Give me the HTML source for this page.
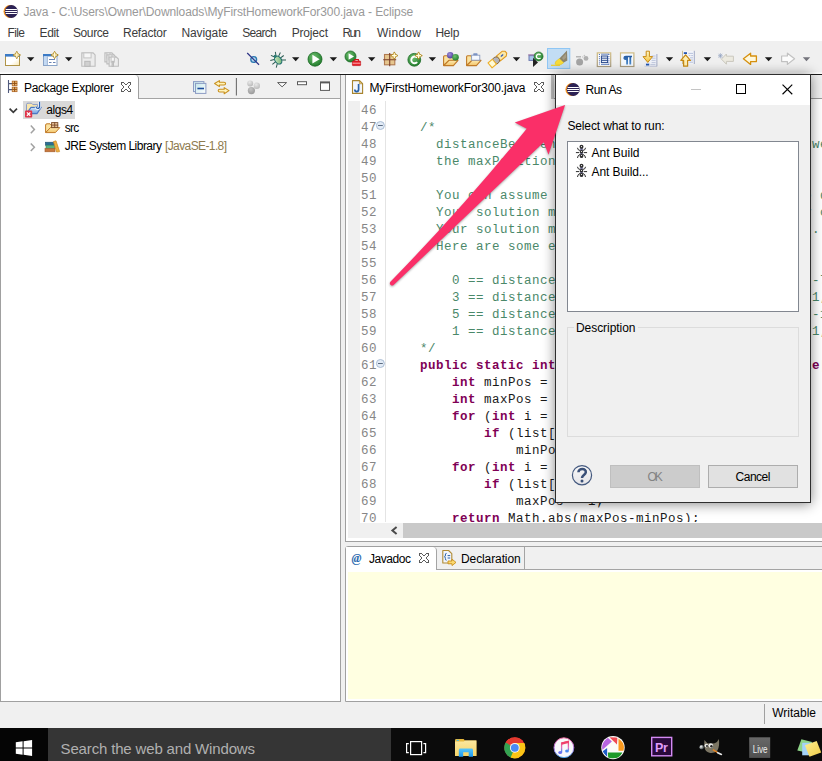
<!DOCTYPE html>
<html><head><meta charset="utf-8"><title>Eclipse</title>
<style>

html,body{margin:0;padding:0;}
body{width:822px;height:761px;overflow:hidden;position:relative;background:#f0f0f0;font-family:"Liberation Sans",sans-serif;font-size:12px;}
.a{position:absolute;}
.t{position:absolute;white-space:nowrap;line-height:16px;height:16px;}
.code{position:absolute;left:388px;top:102px;font-family:"Liberation Mono",monospace;font-size:12.5px;letter-spacing:0.5px;line-height:17px;white-space:pre;color:#1a1a1a;}
.ln{position:absolute;left:361px;top:102px;font-family:"Liberation Mono",monospace;font-size:12.5px;letter-spacing:0.5px;line-height:17px;white-space:pre;color:#868686;}
.c{color:#4a8869;}
.k{color:#7f0055;font-weight:bold;}
svg{position:absolute;overflow:visible;}

</style></head><body>
<div class="a" style="left:0;top:0;width:822px;height:41px;background:#fff;"></div>
<svg style="left:0;top:0" width="822" height="120" viewBox="0 0 822 120">
<defs><clipPath id="ec11"><circle cx="11.3" cy="11.5" r="6.0"/></clipPath></defs>
<circle cx="10.0" cy="11.5" r="6.5" fill="#f7941e"/>
<circle cx="11.3" cy="11.5" r="6.5" fill="#2c2255"/>
<g clip-path="url(#ec11)" shape-rendering="crispEdges"><rect x="5.300000000000001" y="9.0" width="13" height="1" fill="#fff"/><rect x="4.9" y="11.0" width="13" height="1" fill="#fff"/><rect x="5.300000000000001" y="13.0" width="13" height="1" fill="#fff"/></g>
</svg>
<div class="t" style="left:23.40px;top:3.8px;font-size:12px;color:#999;letter-spacing:-0.104px;">Java - C:\Users\Owner\Downloads\MyFirstHomeworkFor300.java - Eclipse</div>
<div class="t" style="left:7.50px;top:25.1px;font-size:12px;color:#3c3c3c;letter-spacing:-0.607px;">File</div>
<div class="t" style="left:39.60px;top:25.1px;font-size:12px;color:#3c3c3c;letter-spacing:-0.433px;">Edit</div>
<div class="t" style="left:73.00px;top:25.1px;font-size:12px;color:#3c3c3c;letter-spacing:-0.408px;">Source</div>
<div class="t" style="left:123.00px;top:25.1px;font-size:12px;color:#3c3c3c;letter-spacing:-0.237px;">Refactor</div>
<div class="t" style="left:181.50px;top:25.1px;font-size:12px;color:#3c3c3c;letter-spacing:-0.120px;">Navigate</div>
<div class="t" style="left:242.30px;top:25.1px;font-size:12px;color:#3c3c3c;letter-spacing:-0.728px;">Search</div>
<div class="t" style="left:291.70px;top:25.1px;font-size:12px;color:#3c3c3c;letter-spacing:-0.170px;">Project</div>
<div class="t" style="left:342.60px;top:25.1px;font-size:12px;color:#3c3c3c;letter-spacing:-1.810px;">Run</div>
<div class="t" style="left:377.00px;top:25.1px;font-size:12px;color:#3c3c3c;letter-spacing:0.256px;">Window</div>
<div class="t" style="left:435.40px;top:25.1px;font-size:12px;color:#3c3c3c;letter-spacing:-0.187px;">Help</div>
<div class="a" style="left:0;top:41px;width:822px;height:33px;background:#f0f0f0;"></div><div class="a" style="left:0;top:72px;width:822px;height:2px;background:linear-gradient(#f6f6f6,#ffffff);"></div>
<div class="a" style="left:0;top:74px;width:822px;height:1px;background:#1a1a1a;"></div>
<svg style="left:0;top:44px" width="822" height="30" viewBox="0 44 822 30"><defs>
<linearGradient id="gWin" x1="0" y1="0" x2="1" y2="1"><stop offset="0" stop-color="#fff"/><stop offset="0.6" stop-color="#fff"/><stop offset="1" stop-color="#f6e6b0"/></linearGradient>
<radialGradient id="gRun" cx="0.4" cy="0.35" r="0.7"><stop offset="0" stop-color="#6fc06f"/><stop offset="1" stop-color="#1f7a2a"/></radialGradient>
<linearGradient id="gFold" x1="0" y1="0" x2="0" y2="1"><stop offset="0" stop-color="#fdeab0"/><stop offset="1" stop-color="#f2c46a"/></linearGradient>
<linearGradient id="gYel" x1="0" y1="0" x2="0" y2="1"><stop offset="0" stop-color="#fff8c8"/><stop offset="1" stop-color="#f4c23a"/></linearGradient>
<radialGradient id="gPur" cx="0.4" cy="0.35" r="0.7"><stop offset="0" stop-color="#a090d8"/><stop offset="1" stop-color="#4a3a98"/></radialGradient>
</defs>
<rect x="5.5" y="54.5" width="14" height="11" fill="url(#gWin)" stroke="#b09448" stroke-width="1"/>
<rect x="5" y="54" width="15" height="2.6" fill="#3b7ac6"/>
<path d="M16.8 51.300000000000004 L18.1 53.7 L20.5 55 L18.1 56.3 L16.8 58.699999999999996 L15.5 56.3 L13.1 55 L15.5 53.7 Z" fill="#d8b040" stroke="#b08a28" stroke-width="0.9"/>
<path d="M16.8 52.6 V57.4 M14.4 55 H19.2" stroke="#fffbe0" stroke-width="1.2"/>
<path d="M27 57.3 h7.4 l-3.7 3.9 z" fill="#1a1a1a"/>
<rect x="43.5" y="54.5" width="13.5" height="11" fill="#fff" stroke="#8aa4c8" stroke-width="1"/>
<rect x="43" y="54" width="14.5" height="2.4" fill="#3b7ac6"/>
<rect x="44" y="56.4" width="3.2" height="8.6" fill="#c4daf4"/><path d="M47.4 56.4 v8.6" stroke="#8aa4c8" stroke-width="0.8"/>
<path d="M49 59.5 h6 M49 62.5 h2.5 M53 62.5 h2.5" stroke="#6a84b4" stroke-width="1.1"/>
<path d="M54.6 51.300000000000004 L55.9 53.7 L58.3 55 L55.9 56.3 L54.6 58.699999999999996 L53.300000000000004 56.3 L50.900000000000006 55 L53.300000000000004 53.7 Z" fill="#d8b040" stroke="#b08a28" stroke-width="0.9"/>
<path d="M54.6 52.6 V57.4 M52.2 55 H57.0" stroke="#fffbe0" stroke-width="1.2"/>
<path d="M65 57.3 h7.4 l-3.7 3.9 z" fill="#1a1a1a"/>
<path d="M81.8 52.9 h11.3 l2 2 v11.4 h-13.3 v-12.4 z" fill="#ececec" stroke="#bdbdbd" stroke-width="1.1"/>
<rect x="83.8" y="52.9" width="7.300000000000001" height="5" fill="#f6f6f6" stroke="#c4c4c4" stroke-width="1"/>
<rect x="84.8" y="61.3" width="5.300000000000001" height="5" fill="#d0d0d0" stroke="#b8b8b8" stroke-width="1"/>
<path d="M104.9 52.9 h7 l2 2 v7 h-9 v-8 z" fill="#ececec" stroke="#bdbdbd" stroke-width="1.1"/>
<rect x="106.9" y="52.9" width="3" height="5" fill="#f6f6f6" stroke="#c4c4c4" stroke-width="1"/>
<rect x="107.9" y="56.9" width="1" height="5" fill="#d0d0d0" stroke="#b8b8b8" stroke-width="1"/>
<path d="M106.9 54.9 h7 l2 2 v7 h-9 v-8 z" fill="#ececec" stroke="#bdbdbd" stroke-width="1.1"/>
<rect x="108.9" y="54.9" width="3" height="5" fill="#f6f6f6" stroke="#c4c4c4" stroke-width="1"/>
<rect x="109.9" y="58.900000000000006" width="1" height="5" fill="#d0d0d0" stroke="#b8b8b8" stroke-width="1"/>
<path d="M109.1 57.1 h7.300000000000001 l2 2 v7.199999999999999 h-9.3 v-8.2 z" fill="#ececec" stroke="#bdbdbd" stroke-width="1.1"/>
<rect x="111.1" y="57.1" width="3.3000000000000007" height="5" fill="#f6f6f6" stroke="#c4c4c4" stroke-width="1"/>
<rect x="112.1" y="61.3" width="1.3000000000000007" height="5" fill="#d0d0d0" stroke="#b8b8b8" stroke-width="1"/>
<circle cx="253.7" cy="59.5" r="2.9" fill="#b4d6ee" stroke="#2a78b0" stroke-width="1.3"/>
<path d="M247.2 53 L259 64.7" stroke="#2a3084" stroke-width="1.2"/>
<defs><linearGradient id="gBug" x1="0" y1="0" x2="1" y2="1"><stop offset="0" stop-color="#d4ecc8"/><stop offset="1" stop-color="#6cb070"/></linearGradient></defs>
<g transform="rotate(-38 277.8 59.6)"><g stroke="#2a5a50" stroke-width="1" fill="none"><path d="M275 57.4 l-3.6 -1.8 M274.6 60 h-4 M275 62.4 l-3.4 2.6 M280.6 57.4 l3.6 -1.8 M281 60 h4 M280.6 62.4 l3.4 2.6 M276.6 55 l-1.6 -3 M279 55 l1.6 -3"/></g><ellipse cx="277.8" cy="60.2" rx="3.1" ry="4.4" fill="url(#gBug)" stroke="#1f6e6e" stroke-width="1.1"/><circle cx="277.8" cy="55.4" r="1.5" fill="#2a7a72"/></g>
<path d="M292 57.3 h7.4 l-3.7 3.9 z" fill="#1a1a1a"/>
<circle cx="315" cy="59.2" r="7" fill="url(#gRun)" stroke="#1c6a24" stroke-width="0.8"/>
<path d="M312.4 54.8 L319.6 59.2 L312.4 63.6 Z" fill="#fff"/>
<path d="M329.7 57.3 h7.4 l-3.7 3.9 z" fill="#1a1a1a"/>
<circle cx="350.5" cy="56.5" r="5.5" fill="url(#gRun)" stroke="#1c6a24" stroke-width="0.8"/>
<path d="M348.6 53.2 L354 56.5 L348.6 59.8 Z" fill="#fff"/>
<rect x="352.4" y="61" width="8.2" height="4.6" rx="0.7" fill="#e8202a" stroke="#c01018" stroke-width="0.7"/>
<path d="M354.8 61 v-1.5 h3.6 v1.5" fill="none" stroke="#d0141c" stroke-width="1.1"/>
<path d="M352.6 63.2 h7.8" stroke="#ffd0d0" stroke-width="0.8"/>
<path d="M368 57.3 h7.4 l-3.7 3.9 z" fill="#1a1a1a"/>
<rect x="384.5" y="54.5" width="10.3" height="10.3" fill="#e6c68e" stroke="#b07a50" stroke-width="1.1"/>
<path d="M383.2 59.7 h13 M389.7 53 v13.2" stroke="#7a3e28" stroke-width="1.1"/>
<path d="M394.3 51.900000000000006 L395.6 54.300000000000004 L398.0 55.6 L395.6 56.9 L394.3 59.3 L393.0 56.9 L390.6 55.6 L393.0 54.300000000000004 Z" fill="#d8b040" stroke="#b08a28" stroke-width="0.9"/>
<path d="M394.3 53.2 V58.0 M391.90000000000003 55.6 H396.7" stroke="#fffbe0" stroke-width="1.2"/>
<circle cx="414.3" cy="59.8" r="6.4" fill="url(#gRun)" stroke="#1c6a24" stroke-width="0.8"/>
<path d="M417.2 57.6 A3.4 3.4 0 1 0 417.2 62.2" fill="none" stroke="#fff" stroke-width="1.9"/>
<path d="M418.6 51.900000000000006 L419.90000000000003 54.300000000000004 L422.3 55.6 L419.90000000000003 56.9 L418.6 59.3 L417.3 56.9 L414.90000000000003 55.6 L417.3 54.300000000000004 Z" fill="#d8b040" stroke="#b08a28" stroke-width="0.9"/>
<path d="M418.6 53.2 V58.0 M416.20000000000005 55.6 H421.0" stroke="#fffbe0" stroke-width="1.2"/>
<path d="M428.7 57.3 h7.4 l-3.7 3.9 z" fill="#1a1a1a"/>
<path d="M443.6 65.5 L443.6 56.7 Q443.6 55.7 444.6 55.7 L447.6 55.7 L449 57.1 L455.4 57.1 L455.4 60.5 L449 60.5 Z" fill="#fbe3a0" stroke="#c07a28" stroke-width="1.1" stroke-linejoin="round"/>
<path d="M443.7 65.6 L449 60.300000000000004 L458 60.300000000000004 L453.4 65.6 Z" fill="url(#gFold)" stroke="#c07a28" stroke-width="1.1" stroke-linejoin="round"/>
<circle cx="450.2" cy="55.3" r="3.2" fill="url(#gPur)"/>
<circle cx="455.5" cy="57.3" r="3.3" fill="url(#gRun)"/>
<path d="M466.6 65.5 L466.6 56.7 Q466.6 55.7 467.6 55.7 L470.6 55.7 L472 57.1 L478.4 57.1 L478.4 60.5 L472 60.5 Z" fill="#fbe3a0" stroke="#c07a28" stroke-width="1.1" stroke-linejoin="round"/>
<path d="M466.7 65.6 L472 60.300000000000004 L481 60.300000000000004 L476.4 65.6 Z" fill="url(#gFold)" stroke="#c07a28" stroke-width="1.1" stroke-linejoin="round"/>
<rect x="471.6" y="55.2" width="8.2" height="5" fill="#f4f8ff" stroke="#8a9cc0" stroke-width="0.9"/>
<rect x="473.2" y="53.2" width="4.4" height="2" rx="0.8" fill="#7a92c4"/>
<g transform="translate(498 58.8) rotate(-39.5)"><path d="M0.5 -3.1 L8.2 -3.1 L10.3 -1.2 L10.3 1.2 L8.2 3.1 L0.5 3.1 Z" fill="#fbe8a8" stroke="#e09a20" stroke-width="1.1" stroke-linejoin="round"/><path d="M-4.6 -3.3 L-1.2 -3.3 L0.8 -1.6 L0.8 1.6 L-1.2 3.3 L-4.6 3.3 Z" fill="#b4b4bc" stroke="#8a6a3a" stroke-width="0.9" stroke-linejoin="round"/><path d="M-4.6 -3.2 L-10.3 -3.2 L-10.3 3.2 L-4.6 3.2 Z" fill="#fffbd8" stroke="#eeb02a" stroke-width="1.1" stroke-linejoin="round"/><path d="M4.2 0 h2" stroke="#2a55b8" stroke-width="1.3" stroke-linecap="round"/></g>
<path d="M512.8 57.3 h7.4 l-3.7 3.9 z" fill="#1a1a1a"/>
<rect x="529" y="55.6" width="6.6" height="4.8" fill="#a8c4ec" stroke="#6a78b0" stroke-width="1"/>
<path d="M528.2 54.9 h9" stroke="#9a78a8" stroke-width="1.2"/>
<path d="M533 57.8 L538 62.4 L533 67 Z" fill="#222"/>
<circle cx="538.6" cy="56.4" r="4.5" fill="url(#gRun)" stroke="#1c6a24" stroke-width="0.6"/>
<path d="M540.5 55 A2.3 2.3 0 1 0 540.5 57.8" fill="none" stroke="#fff" stroke-width="1.3"/>
<rect x="547.5" y="48.5" width="22.3" height="20" fill="#c2ddf4" stroke="#8fc6f4" stroke-width="1"/>
<path d="M551 65.3 h9" stroke="#f0d028" stroke-width="1.2"/>
<path d="M559.4 58.6 L563.8 62.6 L561 64.6 L556.6 65 L555 63.8 L555.8 61.4 Z" fill="#f8dc38" stroke="#e8c418" stroke-width="0.6"/>
<path d="M559.4 58.4 L567 50.6 L567.3 60.6 L563.8 62.6 Z" fill="#8c846c"/>
<path d="M562 58 L566 53.6 L566.2 57.6 L563.6 60 Z" fill="#a49c86"/>
<circle cx="579.6" cy="62" r="3.5" fill="#a4a4a4"/><path d="M576 56.8 h5" stroke="#a8a8a8" stroke-width="1.2"/><circle cx="586" cy="58.4" r="2.4" fill="#b0b0b0"/><circle cx="584.4" cy="55.6" r="0.8" fill="#c0c0c0"/><circle cx="582.8" cy="57" r="0.7" fill="#c4c4c4"/>
<defs><linearGradient id="gBeige" x1="0" y1="0" x2="0" y2="1"><stop offset="0" stop-color="#d0bc84"/><stop offset="1" stop-color="#a89c80"/></linearGradient><linearGradient id="gPil" x1="0" y1="0" x2="0" y2="1"><stop offset="0" stop-color="#245aa0"/><stop offset="1" stop-color="#4c8ccc"/></linearGradient></defs>
<rect x="597.3" y="52.9" width="13.4" height="13.6" fill="#fff" stroke="url(#gBeige)" stroke-width="1.2"/>
<rect x="601.4" y="56" width="6.2" height="6.6" fill="#e8eef8" stroke="#2a4a8c" stroke-width="1"/>
<path d="M601.4 58.2 h6.2 M601.4 60.4 h6.2" stroke="#2a4a8c" stroke-width="0.9"/>
<path d="M601 54.2 h8 M601 64.4 h8" stroke="#5a7cc0" stroke-width="0.9"/>
<path d="M599.4 54 v11 M608.9 54 v11" stroke="#4464b0" stroke-width="1" stroke-dasharray="1 1.1"/>
<rect x="620.5" y="52.9" width="13.4" height="13.6" fill="#f4f9ff" stroke="url(#gBeige)" stroke-width="1.2"/>
<path d="M623.4 58 Q623.4 55.7 625.8 55.7 H632 V57.2 H631.2 V64.6 H629.4 V57.2 H628 V64.6 H626.2 V60 Q623.4 60 623.4 58 Z" fill="url(#gPil)"/>
<rect x="649.2" y="54.2" width="7.6" height="12" fill="#eef1f8" stroke="none"/>
<path d="M656.9 54 V66.4" stroke="#98a2c0" stroke-width="0.9"/>
<path d="M644.6 66.3 H657" stroke="#b0b8d0" stroke-width="0.7"/>
<path d="M651.6 56 h4 M651.6 58.2 h4 M651.6 60.4 h4 M651.6 62.6 h4 M650.4 64.6 h5" stroke="#b4bdd6" stroke-width="0.8"/>
<rect x="644.6" y="62.6" width="5.4" height="3.8" fill="#e4e9f4"/>
<rect x="646" y="63.7" width="3.2" height="1.8" fill="#2456b0"/>
<path d="M646.2 51.2 h3.2 v5.4 h3.2 l-4.8 5.8 l-4.8 -5.8 h3.2 z" fill="url(#gYel)" stroke="#c88a14" stroke-width="1" stroke-linejoin="round"/>
<path d="M665.8 57.3 h7.4 l-3.7 3.9 z" fill="#1a1a1a"/>
<rect x="682.6" y="51" width="11.6" height="12.8" fill="#f2f4fa"/>
<path d="M682.5 50.8 V64" stroke="#c8b888" stroke-width="0.9"/><path d="M694.3 50.8 V64" stroke="#98a2c0" stroke-width="0.9"/>
<path d="M688.4 53.4 h4.6 M688.8 55.6 h1.6 M691.2 55.6 h1.8 M690 57.8 h3 M691 60 h2 M689.4 62.2 h3.6" stroke="#aab6d4" stroke-width="0.8"/>
<rect x="683.8" y="52.2" width="3.2" height="1.8" fill="#2456b0"/>
<path d="M683.6 66.2 h4 v-5.8 h2.8 l-4.8 -5.6 l-4.8 5.6 h2.8 z" fill="#fff0b4" stroke="#c88a14" stroke-width="1.25" stroke-linejoin="round"/>
<path d="M703.7 57.3 h7.4 l-3.7 3.9 z" fill="#1a1a1a"/>
<path d="M721.4 59.1 L726.4 54 L726.4 56.2 L733.4 56.2 L733.4 61.4 L726.4 61.4 L726.4 64.2 Z" fill="#eceae0" stroke="#cac8be" stroke-width="1" stroke-linejoin="round"/>
<path d="M718.6 53.8 l3.6 4 M722.2 53.8 l-3.6 4 M720.4 53.2 v5.2 M718 55.8 h4.8" stroke="#92a2c0" stroke-width="0.7"/>
<path d="M743.4 58.8 L750.6 53.2 L750.6 56 L756.4 56 L756.4 61.6 L750.6 61.6 L750.6 64.4 Z" fill="#fff8dc" stroke="#d6900e" stroke-width="1.3" stroke-linejoin="round"/>
<path d="M764.9 57.3 h7.4 l-3.7 3.9 z" fill="#1a1a1a"/>
<path d="M794.6 58.8 L787.4 53.2 L787.4 56 L781.6 56 L781.6 61.6 L787.4 61.6 L787.4 64.4 Z" fill="#fcfcfc" stroke="#c2c2c2" stroke-width="1.2" stroke-linejoin="round"/>
<path d="M802.8 57.3 h7.4 l-3.7 3.9 z" fill="#74747c"/></svg>
<div class="a" style="left:0;top:75px;width:341px;height:627px;background:#fff;border-right:1px solid #a0a0a0;border-bottom:1px solid #a0a0a0;box-sizing:border-box;"></div>
<div class="a" style="left:0;top:75px;width:340px;height:23px;background:#f0f0f0;border-bottom:1px solid #a4a4a4;box-sizing:content-box;"></div>
<div class="a" style="left:1px;top:75px;width:137px;height:24px;background:#fff;border-right:1px solid #a0a0a0;border-radius:0 4px 0 0;"></div>
<div class="a" style="left:0;top:75px;width:1px;height:626px;background:#a0a0a0;"></div>
<div class="t" style="left:24.00px;top:79.8px;font-size:12px;color:#000;letter-spacing:-0.316px;">Package Explorer</div>
<div class="a" style="left:23px;top:101px;width:52px;height:18px;background:#d9d9d9;"></div>
<div class="t" style="left:46.30px;top:101.6px;font-size:12px;color:#000;letter-spacing:-0.470px;">algs4</div>
<div class="t" style="left:64.80px;top:119.6px;font-size:12px;color:#000;letter-spacing:-0.710px;">src</div>
<div class="t" style="left:64.80px;top:137.6px;font-size:12px;color:#000;letter-spacing:-0.519px;">JRE System Library</div>
<div class="t" style="left:165.00px;top:137.6px;font-size:12px;color:#8e7b4f;letter-spacing:-0.609px;">[JavaSE-1.8]</div>
<svg style="left:0;top:0" width="345" height="160" viewBox="0 0 345 160"><path d="M8.5 80 V93 M8.5 83.6 H12 M8.5 89.6 H12" stroke="#505a7c" stroke-width="1.1" fill="none"/>
<rect x="12.1" y="81" width="5" height="4.8" fill="#c47426" stroke="#a85e1c" stroke-width="0.5"/>
<path d="M14.6 81 v4.8 M12.1 83.4 h5" stroke="#8a4a14" stroke-width="0.7"/>
<circle cx="13.299999999999999" cy="82.2" r="0.65" fill="#f6deb0"/>
<circle cx="15.899999999999999" cy="82.2" r="0.65" fill="#f6deb0"/>
<circle cx="13.299999999999999" cy="84.6" r="0.65" fill="#f6deb0"/>
<circle cx="15.899999999999999" cy="84.6" r="0.65" fill="#f6deb0"/>
<rect x="12.1" y="87" width="5" height="4.8" fill="#c47426" stroke="#a85e1c" stroke-width="0.5"/>
<path d="M14.6 87 v4.8 M12.1 89.4 h5" stroke="#8a4a14" stroke-width="0.7"/>
<circle cx="13.299999999999999" cy="88.2" r="0.65" fill="#f6deb0"/>
<circle cx="15.899999999999999" cy="88.2" r="0.65" fill="#f6deb0"/>
<circle cx="13.299999999999999" cy="90.6" r="0.65" fill="#f6deb0"/>
<circle cx="15.899999999999999" cy="90.6" r="0.65" fill="#f6deb0"/>
<path d="M121 82h1v1h-1zM122 82h1v1h-1zM123 82h1v1h-1zM128 82h1v1h-1zM129 82h1v1h-1zM130 82h1v1h-1zM121 83h1v1h-1zM124 83h1v1h-1zM127 83h1v1h-1zM130 83h1v1h-1zM121 84h1v1h-1zM125 84h1v1h-1zM126 84h1v1h-1zM130 84h1v1h-1zM122 85h1v1h-1zM129 85h1v1h-1zM123 86h1v1h-1zM128 86h1v1h-1zM123 87h1v1h-1zM128 87h1v1h-1zM122 88h1v1h-1zM129 88h1v1h-1zM121 89h1v1h-1zM125 89h1v1h-1zM126 89h1v1h-1zM130 89h1v1h-1zM121 90h1v1h-1zM124 90h1v1h-1zM127 90h1v1h-1zM130 90h1v1h-1zM121 91h1v1h-1zM122 91h1v1h-1zM123 91h1v1h-1zM128 91h1v1h-1zM129 91h1v1h-1zM130 91h1v1h-1z" fill="#5c5c5c" shape-rendering="crispEdges"/>
<defs><linearGradient id="gCy" x1="0" y1="0" x2="1" y2="1"><stop offset="0" stop-color="#c4e6ea"/><stop offset="1" stop-color="#ffffff"/></linearGradient></defs>
<rect x="193.5" y="81.6" width="10.4" height="10" fill="url(#gCy)" stroke="#8c9cc4" stroke-width="1"/>
<rect x="195.5" y="83.4" width="10.4" height="10" fill="url(#gCy)" stroke="#8c9cc4" stroke-width="1"/>
<path d="M197.4 88.5 h6.6" stroke="#1c4c9c" stroke-width="1.6"/>
<path d="M214.6 83.5 L219.4 80.6 L219.4 82.2 L224 82.2 Q225.6 82.2 225.6 83.6 Q225.6 85 224 85 L219.4 85 L219.4 86.6 Z" fill="#fff2b8" stroke="#c8901e" stroke-width="1.1" stroke-linejoin="round"/>
<path d="M229 90.6 L224.2 87.6 L224.2 89.2 L219.8 89.2 Q218.2 89.2 218.2 90.6 Q218.2 92 219.8 92 L224.2 92 L224.2 93.7 Z" fill="#fff2b8" stroke="#c8901e" stroke-width="1.1" stroke-linejoin="round"/>
<path d="M236.4 78 V95.5" stroke="#6e6e6e" stroke-width="1.1"/>
<defs><radialGradient id="gGr" cx="0.4" cy="0.3" r="0.8"><stop offset="0" stop-color="#e8e8e8"/><stop offset="1" stop-color="#b4b4b4"/></radialGradient><radialGradient id="gGr2" cx="0.4" cy="0.3" r="0.8"><stop offset="0" stop-color="#c4c4c4"/><stop offset="1" stop-color="#949494"/></radialGradient></defs>
<circle cx="250.2" cy="83.4" r="3" fill="url(#gGr)"/><circle cx="256.8" cy="85.8" r="3.2" fill="url(#gGr)"/><circle cx="251.4" cy="90.6" r="3.6" fill="url(#gGr2)"/>
<path d="M277.6 82.6 H286.6 L282.1 86.8 Z" fill="#fff" stroke="#5a5a5a" stroke-width="1" stroke-linejoin="miter"/>
<rect x="297.5" y="81.7" width="9" height="3" fill="#fff" stroke="#5a5a5a" stroke-width="1"/>
<rect x="320.5" y="82" width="9" height="8.4" fill="#fff" stroke="#5a5a5a" stroke-width="1"/><path d="M320 82.6 h10" stroke="#5a5a5a" stroke-width="1.6"/>
<path d="M9.6 108.6 L13.3 112.3 L17 108.6" fill="none" stroke="#3a3a3a" stroke-width="1.7"/>
<path d="M30.8 125.60000000000001 L34.4 129.4 L30.8 133.20000000000002" fill="none" stroke="#a2a2a2" stroke-width="1.5"/>
<path d="M30.8 143.39999999999998 L34.4 147.2 L30.8 151.0" fill="none" stroke="#a2a2a2" stroke-width="1.5"/>
<defs><linearGradient id="gBl" x1="0" y1="0" x2="0" y2="1"><stop offset="0" stop-color="#d8e8fa"/><stop offset="1" stop-color="#6e9fe0"/></linearGradient></defs>
<path d="M26.5 112.6 L26.5 104.6 Q26.5 103.2 28 103.2 L31.4 103.2 L32.8 104.6 L37.6 104.6 L37.6 107.6 L31 107.6 Z" fill="#fbe7ac" stroke="#8a9cc8" stroke-width="1" stroke-linejoin="round"/>
<path d="M26.6 113.6 L31 107.4 L41.2 107.4 L37 113.6 Z" fill="url(#gBl)" stroke="#4a78c4" stroke-width="1.1" stroke-linejoin="round"/>
<path d="M39.6 101.8 V106.4 Q39.6 108.4 37.6 108.4 Q36 108.4 36 106.6" fill="none" stroke="#fff" stroke-width="2.6"/>
<path d="M39.6 101.8 V106.4 Q39.6 108.4 37.6 108.4 Q36 108.4 36 106.6" fill="none" stroke="#2e62b0" stroke-width="1.3"/>
<rect x="25" y="110.6" width="7.2" height="7" rx="0.8" fill="#e0344a"/>
<path d="M26.9 112.4 L30.3 115.8 M30.3 112.4 L26.9 115.8" stroke="#fff" stroke-width="1.3"/>
<path d="M45.6 132.4 L45.6 125 Q45.6 123.8 47 123.8 L50 123.8 L51.4 125.2 L57 125.2 L57 128 L50.4 128 Z" fill="#fbe3a0" stroke="#c07a28" stroke-width="1" stroke-linejoin="round"/>
<path d="M45.7 132.6 L50.4 127.6 L59.8 127.6 L55.4 132.6 Z" fill="url(#gFold)" stroke="#c07a28" stroke-width="1" stroke-linejoin="round"/>
<rect x="51.6" y="122.6" width="6.2" height="5" fill="#e8c49a" stroke="#7a4a28" stroke-width="0.9"/><path d="M54.7 122.2 v5.6 M51.4 125.1 h6.8" stroke="#7a4a28" stroke-width="0.9"/>
<rect x="45.4" y="142.2" width="9" height="3" fill="#2a6e92" stroke="#1e5070" stroke-width="0.6"/>
<rect x="46" y="145.4" width="9" height="3" fill="#5cb27e" stroke="#3c8a5a" stroke-width="0.6"/>
<rect x="45" y="148.6" width="10" height="3.2" fill="#c8783e" stroke="#a05a28" stroke-width="0.6"/>
<path d="M53.4 141.6 L56 140.8 L59.6 151.6 L56.6 152 Z" fill="#f0b040" stroke="#c88a20" stroke-width="0.7"/></svg>
<div class="a" style="left:345px;top:75px;width:480px;height:467px;background:#fff;border-left:1px solid #a0a0a0;border-bottom:1px solid #a0a0a0;box-sizing:border-box;"></div>
<div class="a" style="left:552px;top:75px;width:270px;height:23px;background:#f0f0f0;border-bottom:1px solid #9a9a9a;"></div>
<div class="a" style="left:551px;top:75px;width:3px;height:24px;background:#c4c4c4;"></div>
<div class="t" style="left:369.40px;top:79.8px;font-size:12px;color:#000;letter-spacing:-0.159px;">MyFirstHomeworkFor300.java</div>
<div class="a" style="left:348px;top:101px;width:12px;height:437px;background:#f0f0f0;"></div>
<div class="a" style="left:385px;top:101px;width:1px;height:421px;background:#e4e4e4;"></div>
<div class="a" style="left:346px;top:100px;width:476px;height:422px;overflow:hidden;"><div class="ln" style="left:15px;top:3px;">46
47
48
49
50
51
52
53
54
55
56
57
58
59
60
61
62
63
64
65
66
67
68
69
70</div>
<div class="code" style="left:42px;top:3px;">
<span class="c">    /*</span>
<span class="c">      distanceBetweenMinAndMax returns difference between the minPosition and</span>
<span class="c">      the maxPosition in an array of doubles.</span>

<span class="c">      You can assume the array is nonempty and has no duplicates.</span>
<span class="c">      Your solution must go through the array exactly once.</span>
<span class="c">      Your solution must not call any other functions.</span>
<span class="c">      Here are some examples (using "==" informally):</span>

<span class="c">        0 == distanceBetweenMinAndMax(new double[] { -7 })</span>
<span class="c">        3 == distanceBetweenMinAndMax(new double[] { 1, -4, -7, 7, 8, 11 }),</span>
<span class="c">        5 == distanceBetweenMinAndMax(new double[] { -13, -4, -7, 7, 8, 11 })</span>
<span class="c">        1 == distanceBetweenMinAndMax(new double[] { 1, -4, -7, 7, 8, 11, -9 })</span>
<span class="c">    */</span>
    <span class="k">public static int</span> distanceBetweenMinAndMax (<span class="k">double</span>[] list) {
        <span class="k">int</span> minPos = 0;
        <span class="k">int</span> maxPos = 0;
        <span class="k">for</span> (<span class="k">int</span> i = 1; i &lt; list.length; i++)
            <span class="k">if</span> (list[i] &lt; list[minPos])
                minPos = i;
        <span class="k">for</span> (<span class="k">int</span> i = 1; i &lt; list.length; i++)
            <span class="k">if</span> (list[i] &gt; list[maxPos])
                maxPos = i;
        <span class="k">return</span> Math.abs(maxPos-minPos);</div></div>
<div class="a" style="left:360px;top:523px;width:462px;height:15px;background:#f0f0f0;"></div>
<div class="a" style="left:403px;top:523px;width:419px;height:15px;background:#c9c9c9;"></div>
<svg style="left:390px;top:526px" width="8" height="9" viewBox="0 0 8 9"><path d="M6.6 1 L2.4 4.5 L6.6 8" fill="none" stroke="#4a4a4a" stroke-width="2"/></svg>
<div class="a" style="left:345px;top:546px;width:480px;height:156px;background:#fff;border:1px solid #a0a0a0;box-sizing:border-box;border-radius:3px 0 0 0;"></div><div class="a" style="left:348px;top:572px;width:474px;height:127px;background:#ffffe1;"></div>
<div class="a" style="left:346px;top:547px;width:476px;height:22px;background:#f0f0f0;border-bottom:1px solid #a4a4a4;"></div>
<div class="a" style="left:346px;top:547px;width:90px;height:23px;background:#fff;border-right:1px solid #a4a4a4;border-radius:0 4px 0 0;"></div>
<div class="a" style="left:524px;top:547px;width:1px;height:22px;background:#a4a4a4;"></div>
<div class="t" style="left:351.6px;top:549.6px;font-family:'Liberation Serif',serif;font-style:italic;font-weight:bold;font-size:12px;color:#2e6cb0;">@</div>
<div class="t" style="left:369.00px;top:551.3px;font-size:12px;color:#000;letter-spacing:-0.450px;">Javadoc</div>
<div class="t" style="left:461.00px;top:551.3px;font-size:12px;color:#000;letter-spacing:-0.102px;">Declaration</div>
<svg style="left:0;top:0" width="822" height="600" viewBox="0 0 822 600"><path d="M352.5 80.6 H359.6 L362.6 83.6 V93.4 H352.5 Z" fill="#f2f6fc" stroke="#a8842e" stroke-width="1.1" stroke-linejoin="round"/>
<path d="M359.4 80.8 V83.8 H362.4 Z" fill="#e8c878" stroke="#a8842e" stroke-width="0.6"/>
<path d="M358.6 84 V89.6 Q358.6 91.6 356.6 91.6 Q354.8 91.6 354.8 89.6" fill="none" stroke="#2a62a8" stroke-width="1.7"/>
<path d="M534 82h1v1h-1zM535 82h1v1h-1zM536 82h1v1h-1zM541 82h1v1h-1zM542 82h1v1h-1zM543 82h1v1h-1zM534 83h1v1h-1zM537 83h1v1h-1zM540 83h1v1h-1zM543 83h1v1h-1zM534 84h1v1h-1zM538 84h1v1h-1zM539 84h1v1h-1zM543 84h1v1h-1zM535 85h1v1h-1zM542 85h1v1h-1zM536 86h1v1h-1zM541 86h1v1h-1zM536 87h1v1h-1zM541 87h1v1h-1zM535 88h1v1h-1zM542 88h1v1h-1zM534 89h1v1h-1zM538 89h1v1h-1zM539 89h1v1h-1zM543 89h1v1h-1zM534 90h1v1h-1zM537 90h1v1h-1zM540 90h1v1h-1zM543 90h1v1h-1zM534 91h1v1h-1zM535 91h1v1h-1zM536 91h1v1h-1zM541 91h1v1h-1zM542 91h1v1h-1zM543 91h1v1h-1z" fill="#5c5c5c" shape-rendering="crispEdges"/>
<circle cx="380.4" cy="125.5" r="4" fill="#e2ebf6" stroke="#a4b8d0" stroke-width="0.9"/><path d="M378 125.5 h4.8" stroke="#5a6a80" stroke-width="1"/>
<circle cx="380.4" cy="363.5" r="4" fill="#e2ebf6" stroke="#a4b8d0" stroke-width="0.9"/><path d="M378 363.5 h4.8" stroke="#5a6a80" stroke-width="1"/>
<path d="M419 553h1v1h-1zM420 553h1v1h-1zM421 553h1v1h-1zM426 553h1v1h-1zM427 553h1v1h-1zM428 553h1v1h-1zM419 554h1v1h-1zM422 554h1v1h-1zM425 554h1v1h-1zM428 554h1v1h-1zM419 555h1v1h-1zM423 555h1v1h-1zM424 555h1v1h-1zM428 555h1v1h-1zM420 556h1v1h-1zM427 556h1v1h-1zM421 557h1v1h-1zM426 557h1v1h-1zM421 558h1v1h-1zM426 558h1v1h-1zM420 559h1v1h-1zM427 559h1v1h-1zM419 560h1v1h-1zM423 560h1v1h-1zM424 560h1v1h-1zM428 560h1v1h-1zM419 561h1v1h-1zM422 561h1v1h-1zM425 561h1v1h-1zM428 561h1v1h-1zM419 562h1v1h-1zM420 562h1v1h-1zM421 562h1v1h-1zM426 562h1v1h-1zM427 562h1v1h-1zM428 562h1v1h-1z" fill="#5c5c5c" shape-rendering="crispEdges"/>
<path d="M442.8 550.5 H448.6 L451.8 553.6 V563 H442.8 Z" fill="#f2f6fc" stroke="#b08a34" stroke-width="1.1" stroke-linejoin="round"/>
<path d="M446.6 553.4 Q445 553.4 445.4 555 Q445.6 556.6 444.4 556.8 Q445.6 557 445.4 558.6 Q445 560.2 446.6 560.2" fill="none" stroke="#2a62a8" stroke-width="1"/>
<path d="M447.6 555.6 h2.6 M447.6 558 h2.6" stroke="#2a62a8" stroke-width="1"/>
<path d="M448 561 H452 V559.2 L456 562.4 L452 565.6 V563.8 H448 Z" fill="#fbd870" stroke="#c8901e" stroke-width="0.9" stroke-linejoin="round"/></svg>
<div class="a" style="left:764px;top:704px;width:1px;height:20px;background:#a0a0a0;"></div>
<div class="t" style="left:772.20px;top:705.3px;font-size:12px;color:#000;letter-spacing:-0.000px;">Writable</div>
<div class="a" style="left:0;top:728px;width:822px;height:33px;background:#0b0b0b;"></div>
<div class="a" style="left:0;top:728px;width:48px;height:33px;background:#050505;"></div>
<div class="a" style="left:48px;top:728px;width:343px;height:33px;background:#353535;"></div>
<div class="t" style="left:60.60px;top:741.2px;font-size:15px;color:#b0b0b0;letter-spacing:-0.162px;">Search the web and Windows</div>
<svg style="left:0;top:728px" width="822" height="33" viewBox="0 728 822 33"><path d="M15.8 742.3 L22.6 741.3 V747.5 H15.8 Z M23.6 741.2 L32.1 740 V747.5 H23.6 Z M15.8 748.5 H22.6 V754.7 L15.8 753.7 Z M23.6 748.5 H32.1 V756 L23.6 754.8 Z" fill="#fff"/>
<rect x="410.6" y="741.6" width="11" height="13" fill="none" stroke="#fff" stroke-width="1.2"/>
<path d="M408.8 743.6 H406.6 V752.6 H408.8 M423.4 743.6 H425.6 V752.6 H423.4" fill="none" stroke="#fff" stroke-width="1.2"/>
<defs><linearGradient id="gFe" x1="0" y1="0" x2="0" y2="1"><stop offset="0" stop-color="#fbe8a0"/><stop offset="1" stop-color="#f6d468"/></linearGradient><linearGradient id="gFb" x1="0" y1="0" x2="0" y2="1"><stop offset="0" stop-color="#58c6fa"/><stop offset="1" stop-color="#1c98f0"/></linearGradient></defs>
<path d="M455 740.2 Q455 739 456.2 739 H463.6 L465 740.6 H476.4 V756 H455 Z" fill="#e8b83c"/>
<path d="M455 741.4 H463.8 L465.2 740.4 H476.4 V756 H455 Z" fill="url(#gFe)"/>
<rect x="456.6" y="739.8" width="2.4" height="1" fill="#38c0f0"/>
<path d="M458.8 756.8 V750 Q458.8 748.6 460.2 748.6 H471.6 Q473 748.6 473 750 V756.8 H468.7 V752.3 H463.2 V756.8 Z" fill="url(#gFb)"/>
<defs><clipPath id="chc"><circle cx="514.8" cy="747.8" r="10.6"/></clipPath></defs>
<g clip-path="url(#chc)"><circle cx="514.8" cy="747.8" r="10.6" fill="#e53a30"/><path d="M514.8 747.8 L504 741.6 L498 760 L512 762 L519.4 750.4 Z" fill="#34a352"/><path d="M514.8 747.8 L510.2 758.6 L516 764 L532 756 L526 743 L514.8 743 Z" fill="#fbc516"/><path d="M505.2 742.6 H528 V736 H500 Z" fill="#e53a30"/></g>
<circle cx="514.8" cy="747.8" r="4.9" fill="#f4f4f4"/><circle cx="514.8" cy="747.8" r="3.9" fill="#4a8af4"/>
<defs><linearGradient id="gIt" x1="0" y1="0" x2="0" y2="1"><stop offset="0" stop-color="#f06aa0"/><stop offset="0.5" stop-color="#b070e0"/><stop offset="1" stop-color="#4aa8f0"/></linearGradient></defs>
<circle cx="563.9" cy="747.7" r="9.9" fill="#f8f8fa" stroke="url(#gIt)" stroke-width="1"/>
<defs><linearGradient id="gIt2" x1="0" y1="0" x2="0" y2="1"><stop offset="0" stop-color="#f0406a"/><stop offset="0.55" stop-color="#e070c0"/><stop offset="1" stop-color="#3a8cf0"/></linearGradient></defs>
<path d="M561.6 752.2 V743 L568.4 741.4 V750.6" fill="none" stroke="url(#gIt2)" stroke-width="1.3"/><path d="M561.6 743.6 L568.4 742 " stroke="#f0406a" stroke-width="2.2"/><ellipse cx="560.2" cy="752.5" rx="1.9" ry="1.5" fill="#6a70f0"/><ellipse cx="567" cy="750.9" rx="1.9" ry="1.5" fill="#4a8af0"/>
<defs><clipPath id="pic"><circle cx="613" cy="747.6" r="10.9"/></clipPath></defs>
<circle cx="613" cy="747.6" r="11.7" fill="#fbfbf8"/>
<g clip-path="url(#pic)"><path d="M607.6 737.6 L611.9 741.4 L602.6 749.8 L600 747 L603 739 Z" fill="#b866e0"/><path d="M609.4 737.2 L617.4 737.6 L617 744.6 Z" fill="#f04a52"/><path d="M618.5 738.6 L625 744 L625 750.8 L618.5 750.8 Z" fill="#fb9a1e"/><path d="M607.9 752.4 L622.4 752.4 L619.3 758 L608.2 759 Z" fill="#1e9a28"/><path d="M607.1 748 L607.1 757 L602.4 751.4 Z" fill="#1e5cc8"/></g>
<rect x="651.7" y="737.4" width="20" height="18.4" fill="#2a0a3c" stroke="#d48af4" stroke-width="1.4"/>
<text x="655" y="751.6" font-family="Liberation Sans, sans-serif" font-weight="bold" font-size="12.5" fill="#e09cfc" letter-spacing="-0.3">Pr</text>
<defs><radialGradient id="gNose" cx="0.35" cy="0.35" r="0.7"><stop offset="0" stop-color="#ffffff"/><stop offset="0.45" stop-color="#9aa0a0"/><stop offset="1" stop-color="#2a2e2e"/></radialGradient></defs>
<path d="M704.4 740 Q706.6 743.4 709.4 743.4 Q713 743.4 714.6 743.2 Q717.6 742.4 718.8 739 Q720 746 717.4 750.4 Q713.6 753.8 709.4 752.8 Q705.2 751.6 704.6 747.4 Q704 743.6 704.4 740 Z" fill="#7c7664"/>
<circle cx="701.7" cy="747.3" r="2.3" fill="url(#gNose)"/>
<circle cx="706.4" cy="745.6" r="1.9" fill="#e8e8e4"/><circle cx="710.8" cy="745.6" r="2.3" fill="#ececea"/><circle cx="707" cy="746.1" r="1" fill="#222"/><circle cx="711.4" cy="746.2" r="1.2" fill="#222"/>
<path d="M712.9 749.7 L717.7 752.7" stroke="#e88420" stroke-width="1.4"/><path d="M717.7 752.7 L721.4 754.5" stroke="#e8e8e8" stroke-width="1.6" stroke-linecap="round"/>
<defs><linearGradient id="gLv" x1="0" y1="0" x2="0" y2="1"><stop offset="0" stop-color="#686868"/><stop offset="1" stop-color="#505050"/></linearGradient></defs><rect x="749.2" y="737.3" width="21" height="20.6" fill="url(#gLv)"/>
<text x="752.8" y="752.5" font-family="Liberation Sans, sans-serif" font-size="10.8" fill="#f0f0f0" textLength="14.8" lengthAdjust="spacingAndGlyphs">Live</text>
<defs><linearGradient id="gSy" x1="0" y1="0" x2="1" y2="1"><stop offset="0" stop-color="#fdee90"/><stop offset="1" stop-color="#efcc48"/></linearGradient></defs>
<path d="M801.4 739.2 L812 742 L809 753 L797.3 750.4 Z" fill="#8ed488"/>
<rect x="802.2" y="742.8" width="9.6" height="12.5" fill="#a4d2f8"/>
<path d="M804.9 745.3 L816.7 741 L821.2 752.5 L809.5 756.8 Z" fill="url(#gSy)"/></svg>
<div class="a" style="left:555px;top:74px;width:256px;height:429px;background:#f0f0f0;border:1px solid #2e2e2e;box-sizing:border-box;box-shadow:0 1px 12px rgba(0,0,0,0.48);"></div>
<div class="a" style="left:556px;top:75px;width:254px;height:30px;background:#fff;"></div>
<svg style="left:0;top:0" width="822" height="120" viewBox="0 0 822 120">
<defs><clipPath id="ec573"><circle cx="573.2" cy="89.5" r="6.0"/></clipPath></defs>
<circle cx="571.9000000000001" cy="89.5" r="6.5" fill="#f7941e"/>
<circle cx="573.2" cy="89.5" r="6.5" fill="#2c2255"/>
<g clip-path="url(#ec573)" shape-rendering="crispEdges"><rect x="567.2" y="87.0" width="13" height="1" fill="#fff"/><rect x="566.8000000000001" y="89.0" width="13" height="1" fill="#fff"/><rect x="567.2" y="91.0" width="13" height="1" fill="#fff"/></g>
</svg>
<div class="t" style="left:585.50px;top:82.2px;font-size:12px;color:#000;letter-spacing:-0.440px;">Run As</div>
<div class="a" style="left:691px;top:89px;width:10px;height:1px;background:#c4c4c4;"></div>
<div class="a" style="left:736px;top:84px;width:10px;height:10px;border:1px solid #000;box-sizing:border-box;"></div>
<svg style="left:781.6px;top:83.5px" width="10.8" height="10.8" viewBox="0 0 12 12"><path d="M0.6 0.6 L11.4 11.4 M11.4 0.6 L0.6 11.4" stroke="#000" stroke-width="1.25" fill="none"/></svg>
<div class="t" style="left:567.40px;top:117.8px;font-size:12px;color:#000;letter-spacing:-0.126px;">Select what to run:</div>
<div class="a" style="left:567px;top:141px;width:232px;height:171px;background:#fff;border:1px solid #828790;box-sizing:border-box;"></div>
<div class="t" style="left:591.50px;top:145.2px;font-size:12px;color:#000;letter-spacing:-0.008px;">Ant Build</div>
<div class="t" style="left:591.50px;top:164.2px;font-size:12px;color:#000;letter-spacing:-0.075px;">Ant Build...</div>
<div class="a" style="left:567px;top:327px;width:232px;height:110px;border:1px solid #dcdcdc;box-sizing:border-box;"></div>
<div class="a" style="left:574px;top:320px;width:64px;height:14px;background:#f0f0f0;"></div>
<div class="t" style="left:576.00px;top:319.8px;font-size:12px;color:#000;letter-spacing:-0.060px;">Description</div>
<svg style="left:571px;top:464px" width="22" height="22" viewBox="0 0 22 22"><defs><linearGradient id="gHelp" x1="0" y1="0" x2="0" y2="1"><stop offset="0" stop-color="#f8f8f8"/><stop offset="1" stop-color="#e4e4e8"/></linearGradient></defs><circle cx="11" cy="11.2" r="9.6" fill="url(#gHelp)" stroke="#44597f" stroke-width="1.2"/><path d="M7.4 8.2 C7.6 3.6 15.4 4 14.8 8.4 C14.4 11 11 11.2 11 14" fill="none" stroke="#3a5078" stroke-width="2.5"/><circle cx="11" cy="17" r="1.5" fill="#3a5078"/></svg>
<div class="a" style="left:610px;top:465px;width:90px;height:23px;background:#cccccc;border:1px solid #bfbfbf;box-sizing:border-box;"></div>
<div class="t" style="left:647.40px;top:468.8px;font-size:12px;color:#838383;letter-spacing:-1.940px;">OK</div>
<div class="a" style="left:708px;top:465px;width:90px;height:23px;background:#e1e1e1;border:1px solid #adadad;box-sizing:border-box;"></div>
<div class="t" style="left:735.50px;top:468.8px;font-size:12px;color:#000;letter-spacing:-0.476px;">Cancel</div>
<svg style="left:0;top:0" width="822" height="520" viewBox="0 0 822 520"><rect x="580.2" y="145.4" width="2.6" height="12.2" rx="1.2" fill="#6c6c94"/><g stroke="#2c2c2c" stroke-width="1" fill="none" stroke-linecap="round"><path d="M579.9 150.5 Q577.5 150.2 577.5 148.2"/><path d="M583.1 150.5 Q585.5 150.2 585.5 148.2"/><path d="M578.9 152.6 H576.3"/><path d="M584.1 152.6 H586.7"/><path d="M579.9 154.4 Q577.5 155.4 577.5 157.6"/><path d="M583.1 154.4 Q585.5 155.4 585.5 157.6"/></g><circle cx="581.5" cy="146.7" r="2" fill="#2e2e2e"/><circle cx="581.5" cy="151.8" r="1.7" fill="#2e2e2e"/><circle cx="581.5" cy="156" r="1.9" fill="#2e2e2e"/><circle cx="581.5" cy="146.6" r="0.6" fill="#fff"/><circle cx="581.5" cy="151.5" r="0.6" fill="#fff"/><circle cx="581.5" cy="155.5" r="0.6" fill="#fff"/>
<rect x="580.2" y="164.4" width="2.6" height="12.2" rx="1.2" fill="#6c6c94"/><g stroke="#2c2c2c" stroke-width="1" fill="none" stroke-linecap="round"><path d="M579.9 169.5 Q577.5 169.2 577.5 167.2"/><path d="M583.1 169.5 Q585.5 169.2 585.5 167.2"/><path d="M578.9 171.6 H576.3"/><path d="M584.1 171.6 H586.7"/><path d="M579.9 173.4 Q577.5 174.4 577.5 176.6"/><path d="M583.1 173.4 Q585.5 174.4 585.5 176.6"/></g><circle cx="581.5" cy="165.7" r="2" fill="#2e2e2e"/><circle cx="581.5" cy="170.8" r="1.7" fill="#2e2e2e"/><circle cx="581.5" cy="175" r="1.9" fill="#2e2e2e"/><circle cx="581.5" cy="165.6" r="0.6" fill="#fff"/><circle cx="581.5" cy="170.5" r="0.6" fill="#fff"/><circle cx="581.5" cy="174.5" r="0.6" fill="#fff"/></svg>
<svg style="left:0;top:0;filter:drop-shadow(0.6px 1px 0.8px rgba(0,0,0,0.35));" width="822" height="761" viewBox="0 0 822 761"><path d="M390.2 282 Q461.8 208.6 526.7 128.7 L514.8 122.4 L565.1 105.1 L548.5 154.7 L543.8 142.3 L393.6 285 A2.3 2.3 0 0 1 390.2 282 Z" fill="#fa2f68"/></svg>
</body></html>
